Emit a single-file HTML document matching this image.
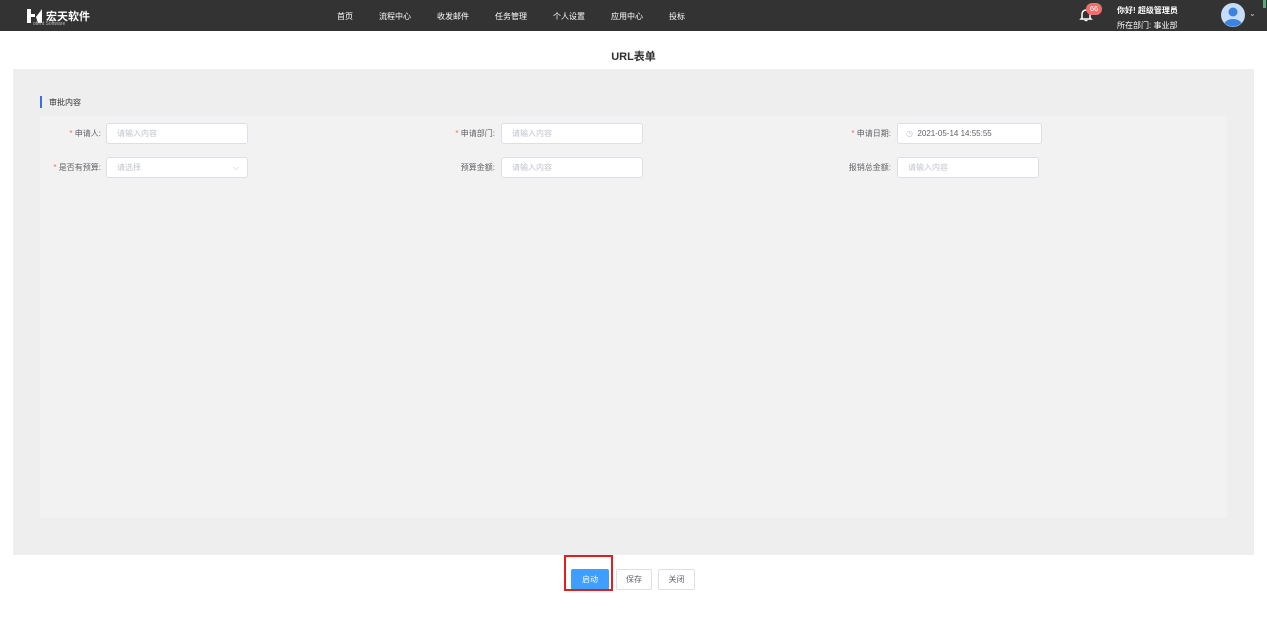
<!DOCTYPE html><html><head><meta charset="utf-8"><style>
*{margin:0;padding:0;box-sizing:border-box}
body{width:1267px;height:618px;background:#fff;font-family:"Liberation Sans","Noto Sans CJK SC",sans-serif;position:relative;overflow:hidden;font-size:9px;color:#606266}
.a{position:absolute}
.hd{left:0;top:0;width:1267px;height:31px;background:#333}
.nav{color:#fff;font-size:8px;top:11px}
.inp{position:absolute;height:21px;background:#fff;border:1px solid #dcdfe6;border-radius:3px;color:#c0c4cc;padding-left:10px;line-height:19px;font-size:8px}
.lb{position:absolute;text-align:right;width:120px;font-size:8px;color:#606266;line-height:21px}
.lb i{color:#f56c6c;font-style:normal}
.btn{position:absolute;top:569px;height:21px;border:1px solid #dcdfe6;border-radius:2px;background:#fff;text-align:center;line-height:19px;font-size:8px;color:#606266}
</style></head><body>
<div class="a hd"></div>
<svg class="a" style="left:26px;top:8px" width="18" height="16" viewBox="0 0 18 16"><path d="M1 1h4v14H1zM5 6h4v3H5zM10 9l6-8v14h-4z" fill="#fff"/></svg>
<div class="a" style="left:46px;top:8px;color:#fff;font-weight:bold;font-size:11px">宏天软件</div>
<div class="a" style="left:33px;top:21px;color:#bbb;font-size:5px">otent Software</div>
<div class="a nav" style="left:337px">首页</div>
<div class="a nav" style="left:379px">流程中心</div>
<div class="a nav" style="left:437px">收发邮件</div>
<div class="a nav" style="left:495px">任务管理</div>
<div class="a nav" style="left:553px">个人设置</div>
<div class="a nav" style="left:611px">应用中心</div>
<div class="a nav" style="left:669px">投标</div>
<svg class="a" style="left:1079px;top:8px" width="14" height="14" viewBox="0 0 14 14"><path d="M3 10V6a4 4 0 018 0v4l1 1H2z" fill="none" stroke="#fff" stroke-width="1.5"/><path d="M5.5 12.5h3" stroke="#fff" stroke-width="1.3"/></svg>
<div class="a" style="left:1086px;top:3px;width:16px;height:12px;border-radius:6px;background:#f56c6c;color:#fff;font-size:7.5px;text-align:center;line-height:12px">66</div>
<div class="a" style="left:1117px;top:5px;color:#fff;font-size:8px;font-weight:bold">你好! 超级管理员</div>
<div class="a" style="left:1117px;top:20px;color:#fff;font-size:8px">所在部门: 事业部</div>
<svg class="a" style="left:1221px;top:3px" width="24" height="24" viewBox="0 0 24 24"><circle cx="12" cy="12" r="12" fill="#c7dcf7"/><circle cx="12" cy="9" r="4.5" fill="#3e82e0"/><path d="M3.5 20a9 6 0 0117 0 12 12 0 01-17 0z" fill="#3e82e0"/></svg>
<div class="a" style="left:1249px;top:9px;color:#ccc;font-size:8px">⌄</div>
<div class="a" style="left:1263px;top:0;width:3px;height:8px;background:#5a7"></div>
<div class="a" style="left:0;top:48px;width:1267px;text-align:center;font-size:11px;font-weight:bold;color:#303133">URL表单</div>
<div class="a" style="left:13px;top:69px;width:1241px;height:486px;background:#eee"></div>
<div class="a" style="left:40px;top:116px;width:1187px;height:402px;background:#f2f2f2"></div>
<div class="a" style="left:40px;top:96px;width:2px;height:12px;background:#3b6ee8"></div>
<div class="a" style="left:49px;top:97px;font-size:8px;color:#303133">审批内容</div>
<div class="lb" style="left:-19px;top:123px"><i>* </i>申请人:</div>
<div class="inp" style="left:106px;top:123px;width:142px">请输入内容</div>
<div class="lb" style="left:375px;top:123px"><i>* </i>申请部门:</div>
<div class="inp" style="left:501px;top:123px;width:142px">请输入内容</div>
<div class="lb" style="left:771px;top:123px"><i>* </i>申请日期:</div>
<div class="inp" style="left:897px;top:123px;width:145px;color:#606266;padding-left:8px"><span style="color:#c0c4cc">◷</span>&nbsp; 2021-05-14 14:55:55</div>
<div class="lb" style="left:-19px;top:157px"><i>* </i>是否有预算:</div>
<div class="inp" style="left:106px;top:157px;width:142px">请选择<span style="position:absolute;right:8px;color:#c0c4cc">⌵</span></div>
<div class="lb" style="left:375px;top:157px">预算金额:</div>
<div class="inp" style="left:501px;top:157px;width:142px">请输入内容</div>
<div class="lb" style="left:771px;top:157px">报销总金额:</div>
<div class="inp" style="left:897px;top:157px;width:142px">请输入内容</div>
<div class="btn" style="left:571px;width:38px;background:#409eff;border-color:#409eff;color:#fff">启动</div>
<div class="btn" style="left:616px;width:36px">保存</div>
<div class="btn" style="left:658px;width:37px">关闭</div>
<div class="a" style="left:564px;top:555px;width:49px;height:36px;border:2px solid #e02020"></div>
</body></html>
